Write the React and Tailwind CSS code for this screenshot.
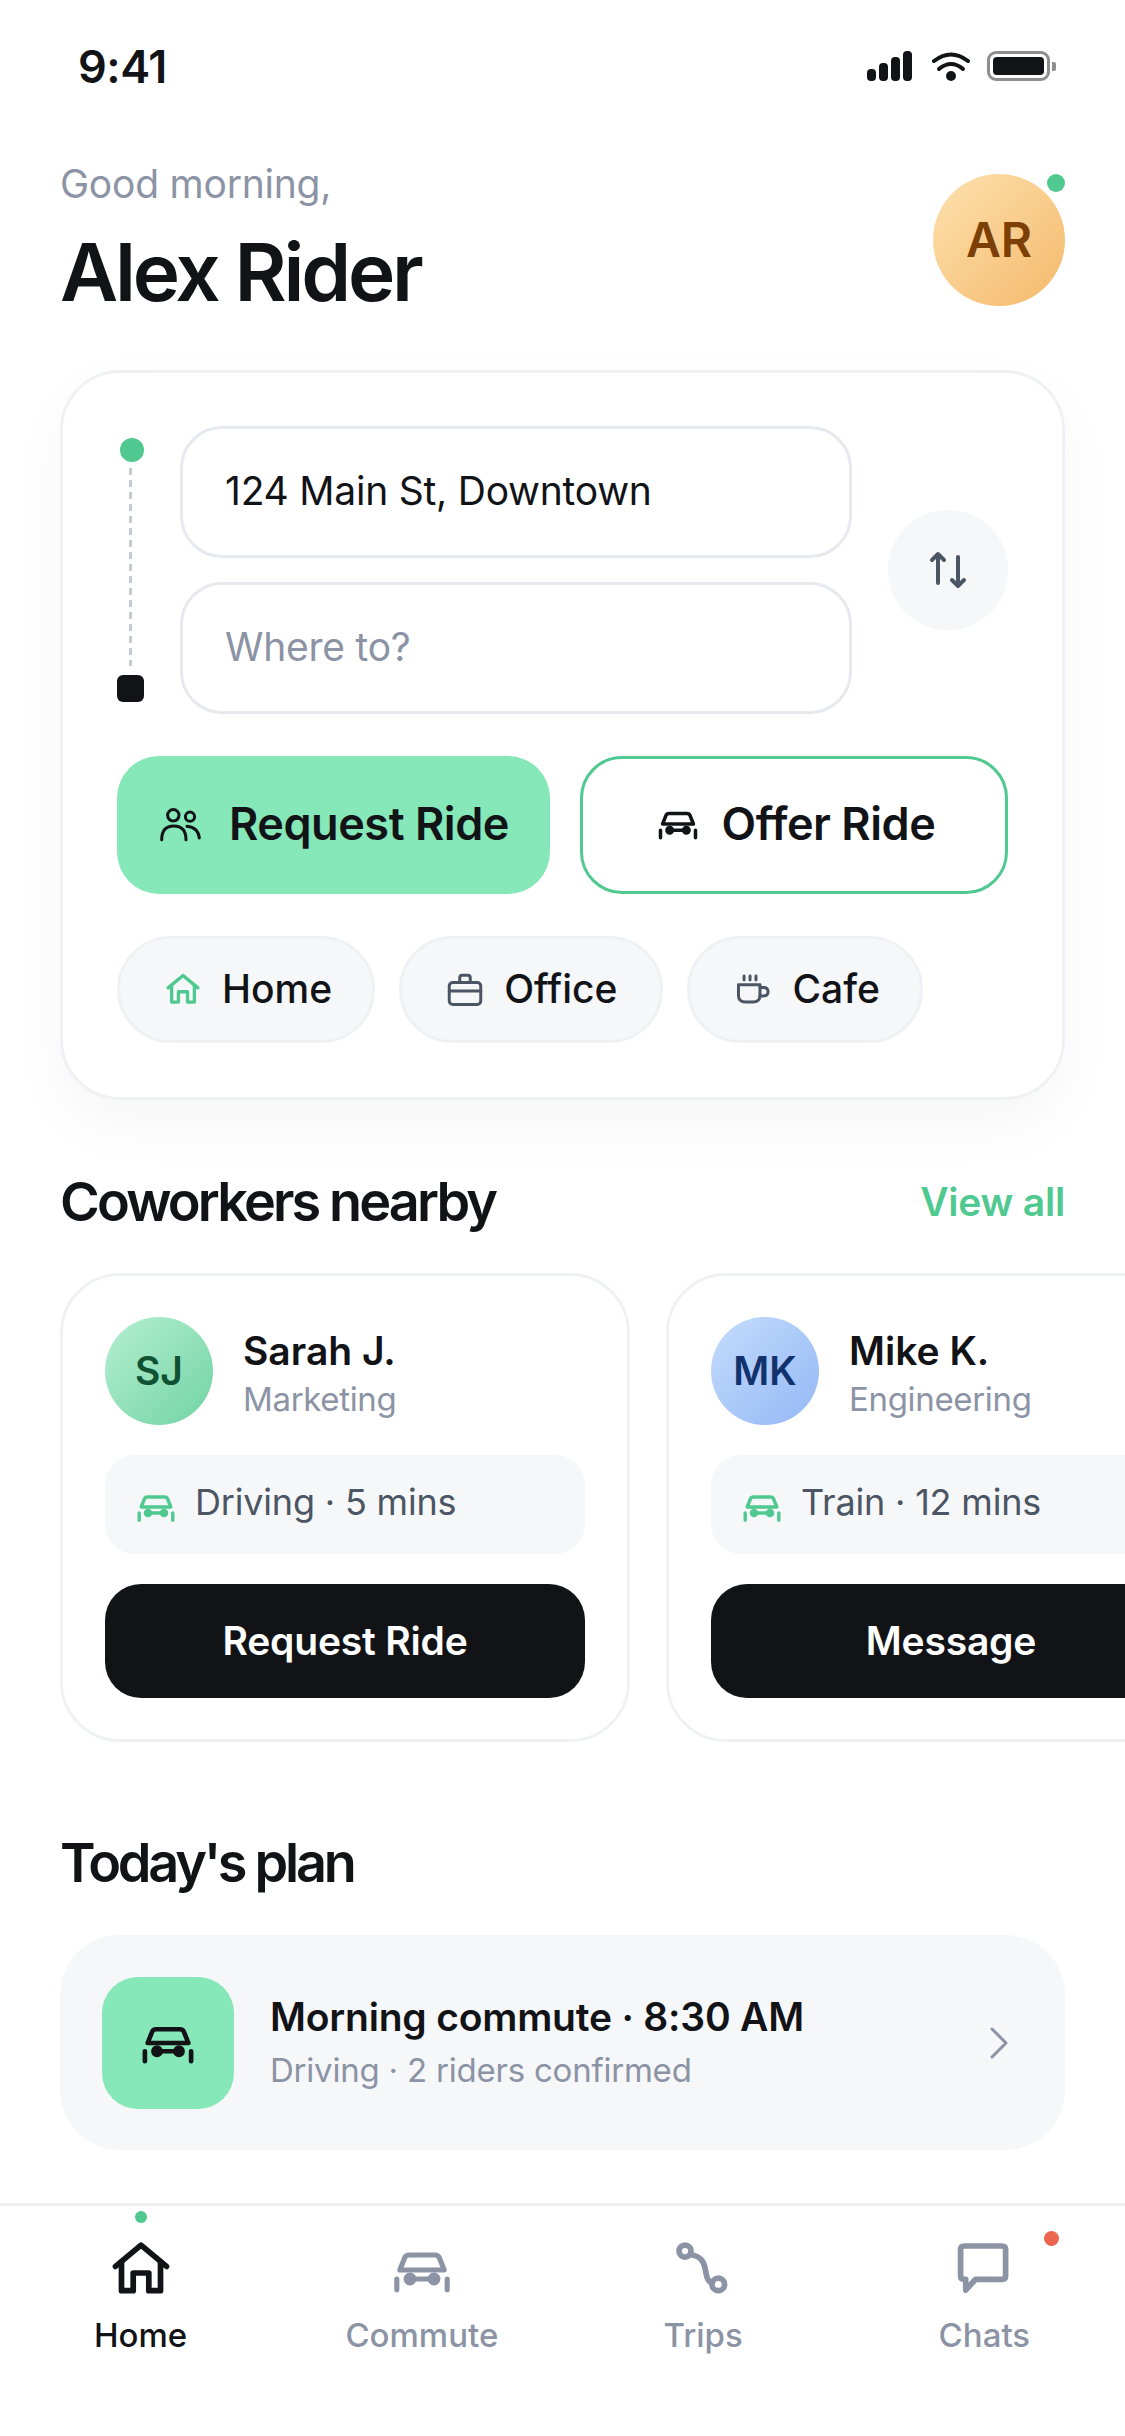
const Car = ({ className }) => (
  <svg viewBox="0 0 24 24" fill="none" stroke="currentColor" strokeWidth="1.7" strokeLinecap="round" strokeLinejoin="round" className={className}>
    <path d="M4.6 12 L6.2 8 Q6.6 7 7.7 7 H16.3 Q17.4 7 17.8 8 L19.4 12 Z" />
    <path d="M8 15 H16" />
    <circle cx="8" cy="15" r="1.3" fill="currentColor" />
    <circle cx="16" cy="15" r="1.3" fill="currentColor" />
    <path d="M3.6 15 V18.6 M20.4 15 V18.6" />
  </svg>
);

const Home = ({ className }) => (
  <svg viewBox="0 0 24 24" fill="none" stroke="currentColor" strokeWidth="1.9" strokeLinecap="round" strokeLinejoin="round" className={className}>
    <path d="M3.5 10.8 L12 3.7 L20.5 10.8" />
    <path d="M5.5 9.4 V18.9 H9.4 V13 H14.6 V18.9 H18.5 V9.4" />
  </svg>
);

const Route = ({ className }) => (
  <svg viewBox="0 0 24 24" fill="none" stroke="currentColor" strokeWidth="1.9" strokeLinecap="round" className={className}>
    <circle cx="6" cy="5.7" r="2" />
    <circle cx="17.1" cy="16.8" r="2.1" />
    <path d="M8 6.9 C12 7.5 12.5 10 13 13 C13.3 15 14 16 15 16.3" />
  </svg>
);

const Chat = ({ className }) => (
  <svg viewBox="0 0 24 24" fill="none" stroke="currentColor" strokeWidth="1.9" strokeLinecap="round" strokeLinejoin="round" className={className}>
    <path d="M5.4 4 H18 Q19.2 4 19.2 5.2 V13.9 Q19.2 15.1 18 15.1 H9.2 L5.9 18.7 V15.1 H5.4 Q4.2 15.1 4.2 13.9 V5.2 Q4.2 4 5.4 4 Z" />
  </svg>
);

const People = ({ className }) => (
  <svg viewBox="0 0 48 48" fill="none" stroke="currentColor" strokeWidth="3" strokeLinecap="round" strokeLinejoin="round" className={className}>
    <circle cx="17.3" cy="15.3" r="5.7" />
    <circle cx="34" cy="16.7" r="4.6" />
    <path d="M5.7 39.7 C5.7 30 10 26 17.8 26 C25 26 30 30 30 39.7" />
    <path d="M31 26.3 C38 27 42.5 31 43.3 38" />
  </svg>
);

const Briefcase = ({ className }) => (
  <svg viewBox="0 0 24 24" fill="none" stroke="currentColor" strokeWidth="1.7" strokeLinecap="round" strokeLinejoin="round" className={className}>
    <rect x="3" y="7.7" width="18" height="12.6" rx="2" />
    <path d="M9 7.7 V5 Q9 3.6 10.4 3.6 H13.6 Q15 3.6 15 5 V7.7" />
    <path d="M3 12.6 H21" />
  </svg>
);

const Cup = ({ className }) => (
  <svg viewBox="0 0 24 24" fill="none" stroke="currentColor" strokeWidth="1.7" strokeLinecap="round" strokeLinejoin="round" className={className}>
    <path d="M3.7 9 H16 V15 Q16 18.9 12 18.9 H7.7 Q3.7 18.9 3.7 15 Z" />
    <path d="M16 10.6 H18 Q20.6 10.6 20.6 13 Q20.6 15.4 18 15.4 H16" />
    <path d="M6.9 4 V6.3 M10.3 4 V6.3 M13.7 4 V6.3" />
  </svg>
);

const StatusBar = () => (
  <div className="flex items-center justify-between pl-[78px] pr-[69px] pt-[42px] h-[132px] pb-[42px]">
    <span className="text-[45px] font-semibold text-[#111317] leading-none tracking-[-0.01em]">9:41</span>
    <div className="flex items-center">
      <svg width="45" height="30" viewBox="0 0 45 30" fill="#111317">
        <rect x="0" y="18" width="9" height="12" rx="4" />
        <rect x="12" y="12" width="9" height="18" rx="4" />
        <rect x="24" y="6" width="9" height="24" rx="4" />
        <rect x="36" y="0" width="9" height="30" rx="4" />
      </svg>
      <svg width="38" height="30" viewBox="0 0 38 30" fill="none" stroke="#111317" strokeWidth="4" strokeLinecap="round" className="ml-[20px]">
        <path d="M2 10 Q19 -3 36 10" />
        <path d="M7 18 Q19 8 31 18" />
        <circle cx="19" cy="25" r="5" fill="#111317" stroke="none" />
      </svg>
      <div className="ml-[17px] flex items-center gap-[2px]">
        <div className="w-[63px] h-[30px] rounded-[9px] border-[3px] border-[#8e8e8e] p-[3px]">
          <div className="w-full h-full rounded-[4px] bg-[#111317]"></div>
        </div>
        <div className="w-[4px] h-[9px] rounded-r-[2px] bg-[#8e8e8e]"></div>
      </div>
    </div>
  </div>
);

const chips = [
  { label: 'Home', icon: Home, color: 'text-[#4fc98f]', pad: 'pr-[40px]' },
  { label: 'Office', icon: Briefcase, color: 'text-[#4b5563]', pad: 'pr-[43px]' },
  { label: 'Cafe', icon: Cup, color: 'text-[#4b5563]', pad: 'pr-[40px]' }
];

const coworkers = [
  {
    initials: 'SJ',
    name: 'Sarah J.',
    team: 'Marketing',
    status: 'Driving · 5 mins',
    action: 'Request Ride',
    avatar: 'bg-gradient-to-br from-[#b5efd2] to-[#6fd3a3] text-[#0f5132]'
  },
  {
    initials: 'MK',
    name: 'Mike K.',
    team: 'Engineering',
    status: 'Train · 12 mins',
    action: 'Message',
    avatar: 'bg-gradient-to-br from-[#c5dcfd] to-[#93b8f4] text-[#12326e]'
  }
];

const tabs = [
  { label: 'Home', icon: Home, active: true },
  { label: 'Commute', icon: Car },
  { label: 'Trips', icon: Route },
  { label: 'Chats', icon: Chat, badge: true }
];

const CoworkerCard = ({ person }) => (
  <div className="w-[570px] shrink-0 h-[469px] rounded-[60px] border-[3px] border-[#f0f1f5] bg-white px-[42px] pt-[41px] flex flex-col">
    <div className="flex items-center gap-[30px]">
      <div className={`w-[108px] h-[108px] rounded-full flex items-center justify-center text-[39px] font-semibold ${person.avatar}`}>
        {person.initials}
      </div>
      <div className="mt-[7px] flex flex-col">
        <span className="text-[39px] leading-[48px] font-semibold text-[#111317]">{person.name}</span>
        <span className="text-[33px] leading-[48px] tracking-[-0.01em] text-[#8b93a5]">{person.team}</span>
      </div>
    </div>
    <div className="mt-[30px] h-[99px] rounded-[30px] bg-[#f6f7f9] flex items-center gap-[15px] pl-[27px]">
      <Car className="mt-[5px] w-[48px] h-[48px] text-[#4fc98f]" />
      <span className="mb-[5px] text-[36px] tracking-[-0.005em] text-[#4b5563]">{person.status}</span>
    </div>
    <button className="mt-[30px] h-[114px] rounded-[36px] bg-[#111317] text-white text-[39px] font-semibold tracking-[-0.005em]">
      {person.action}
    </button>
  </div>
);

export default function App() {
  return (
    <div className="w-[1125px] h-[2436px] bg-white overflow-hidden flex flex-col font-['Inter',sans-serif]">
      <StatusBar />

      <main className="flex-1 px-[60px]">
        <div className="flex items-start justify-between pt-[25px]">
          <div className="flex flex-col">
            <span className="text-[39px] leading-[54px] tracking-[-0.006em] text-[#8b93a5]">Good morning,</span>
            <h1 className="mt-[13px] text-[80px] leading-[96px] font-semibold tracking-[-0.04em] text-[#111317]">Alex Rider</h1>
          </div>
          <div className="relative mt-[17px]">
            <div className="w-[132px] h-[132px] rounded-full bg-gradient-to-br from-[#fde1ae] to-[#f4b96a] flex items-center justify-center text-[48px] font-semibold text-[#7c3f06]">
              AR
            </div>
            <span className="absolute top-0 right-0 w-[18px] h-[18px] rounded-full bg-[#4fc98f]"></span>
          </div>
        </div>

        <section className="mt-[50px] rounded-[60px] border-[3px] border-[#f0f1f5] bg-white px-[54px] pt-[53px] pb-[54px] shadow-[0_24px_60px_rgba(17,19,23,0.04)]">
          <div className="flex items-center">
            <div className="w-[63px] self-stretch flex flex-col items-start">
              <span className="ml-[3px] mt-[12px] w-[24px] h-[24px] rounded-full bg-[#4fc98f]"></span>
              <span className="ml-[12px] mt-[6px] flex-1 w-[3px] bg-[repeating-linear-gradient(to_bottom,#c4c9d2_0,#c4c9d2_7px,transparent_7px,transparent_12px)]"></span>
              <span className="mt-[9px] mb-[12px] w-[27px] h-[27px] rounded-[6px] bg-[#111317]"></span>
            </div>
            <div className="w-[672px] flex flex-col gap-[24px]">
              <div className="h-[132px] rounded-[42px] border-[3px] border-[#e8e9ef] flex items-center pl-[42px] pb-[2px] text-[39px] tracking-[-0.006em] text-[#111317]">
                124 Main St, Downtown
              </div>
              <div className="h-[132px] rounded-[42px] border-[3px] border-[#e8e9ef] flex items-center pl-[42px] pb-[2px] text-[39px] tracking-[-0.006em] text-[#8b93a5]">
                Where to?
              </div>
            </div>
            <button className="ml-[36px] w-[120px] h-[120px] rounded-full bg-[#f6f7f9] flex items-center justify-center">
              <svg width="60" height="60" viewBox="0 0 60 60" fill="none" stroke="#4b5563" strokeWidth="4" strokeLinecap="round" strokeLinejoin="round">
                <path d="M20 43 V14 M14 20 L20 14 L26 20" />
                <path d="M40 17 V46 M34 40 L40 46 L46 40" />
              </svg>
            </button>
          </div>

          <div className="mt-[42px] flex gap-[30px]">
            <button className="w-[433px] h-[138px] rounded-[42px] bg-[#86e7b8] flex items-center justify-center gap-[25px] pr-[2px] pb-[2px] text-[45px] font-semibold tracking-[-0.01em] text-[#111317]">
              <People className="w-[48px] h-[48px]" />
              Request Ride
            </button>
            <button className="w-[428px] h-[138px] rounded-[42px] border-[3px] border-[#4fc98f] bg-white flex items-center justify-center gap-[19px] pb-[2px] text-[45px] font-semibold tracking-[-0.01em] text-[#111317]">
              <Car className="w-[50px] h-[50px]" />
              Offer Ride
            </button>
          </div>

          <div className="mt-[42px] flex gap-[24px]">
            {chips.map(({ label, icon: Icon, color, pad }) => (
              <div key={label} className={`h-[107px] rounded-full border-[3px] border-[#f0f1f5] bg-[#f6f7f9] flex items-center gap-[18px] pl-[42px] text-[39px] font-medium text-[#111317] ${pad}`}>
                <Icon className={`w-[42px] h-[42px] ${color}`} />
                {label}
              </div>
            ))}
          </div>
        </section>

        <div className="mt-[69px] flex items-center justify-between">
          <h2 className="text-[54px] leading-[66px] font-semibold tracking-[-0.053em] text-[#111317]">Coworkers nearby</h2>
          <span className="text-[39px] font-semibold tracking-[-0.005em] text-[#4fc98f]">View all</span>
        </div>

        <div className="mt-[38px] flex gap-[36px]">
          {coworkers.map(person => (
            <CoworkerCard key={person.name} person={person} />
          ))}
        </div>

        <h2 className="mt-[88px] text-[54px] leading-[66px] font-semibold tracking-[-0.06em] text-[#111317]">Today's plan</h2>

        <div className="mt-[39px] h-[215px] rounded-[60px] bg-[#f6f7f9] flex items-center pl-[42px] pr-[46px]">
          <div className="w-[132px] h-[132px] rounded-[36px] bg-[#86e7b8] flex items-center justify-center">
            <Car className="w-[66px] h-[66px] text-[#111317]" />
          </div>
          <div className="ml-[36px] flex-1 flex flex-col">
            <span className="text-[39px] leading-[54px] font-semibold tracking-[-0.005em] text-[#111317]">Morning commute · 8:30 AM</span>
            <span className="text-[33px] leading-[52px] tracking-[-0.0065em] text-[#8b93a5]">Driving · 2 riders confirmed</span>
          </div>
          <svg width="42" height="42" viewBox="0 0 42 42" fill="none" stroke="#8b93a5" strokeWidth="3" strokeLinecap="round" strokeLinejoin="round">
            <path d="M15 7 L29 21 L15 35" />
          </svg>
        </div>
      </main>

      <nav className="h-[233px] border-t-[3px] border-[#f0f1f5] grid grid-cols-4">
        {tabs.map(({ label, icon: Icon, active, badge }) => (
          <div key={label} className={`relative flex flex-col items-center pt-[28px] ${active ? 'text-[#111317]' : 'text-[#8b93a5]'}`}>
            {active && <span className="absolute top-[5px] w-[12px] h-[12px] rounded-full bg-[#4fc98f]"></span>}
            <div className="relative">
              <Icon className="w-[72px] h-[72px]" />
              {badge && <span className="absolute top-[-3px] right-[-39px] w-[15px] h-[15px] rounded-full bg-[#ec6650]"></span>}
            </div>
            <span className="mt-[8px] text-[33px] leading-[42px] font-medium">{label}</span>
          </div>
        ))}
      </nav>
    </div>
  );
}
